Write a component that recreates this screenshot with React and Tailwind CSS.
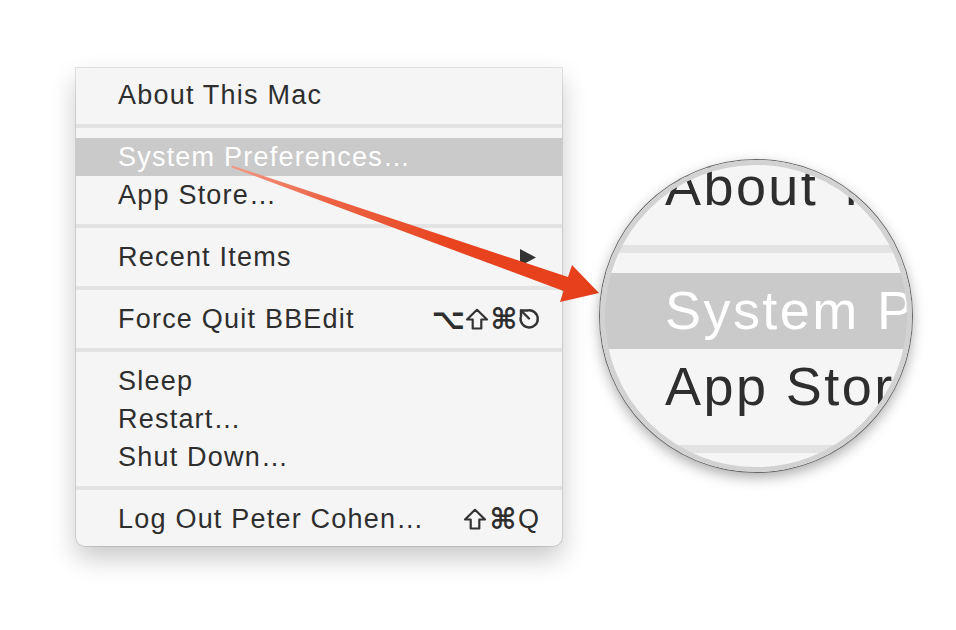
import React from 'react';

const Sep = () => (
  <div className="h-[24px] flex items-center">
    <div className="w-full h-[4px] bg-[#e3e3e3]" />
  </div>
);

const Glyph = ({ children, w }) => (
  <span className={`inline-flex justify-center ${w}`}>{children}</span>
);

const ShiftIcon = () => (
  <svg width="24" height="22" viewBox="0 0 24 22" fill="none" stroke="#333" strokeWidth="2.2" strokeLinejoin="round">
    <path d="M12 1.8 L22 11.5 H16.3 V20.5 H7.7 V11.5 H2 Z" />
  </svg>
);

const EscIcon = () => (
  <svg width="24" height="22" viewBox="0 0 24 22" fill="none" stroke="#333" strokeWidth="2.4" strokeLinecap="round">
    <path d="M10 2.4 A8.6 8.6 0 1 1 2.6 10" />
    <path d="M3 2.5 L11 10.5" />
    <path d="M3 2.5 H9 M3 2.5 V8.5" />
  </svg>
);

const Row = ({ label, active, right }) => (
  <div
    className={`h-[38px] leading-[36px] pl-[42px] pr-[19px] flex items-center justify-between whitespace-nowrap ${
      active ? 'bg-[#cacaca] text-white' : ''
    }`}
  >
    <span>{label}</span>
    {right}
  </div>
);

function Menu({ shadow }) {
  return (
    <div
      className={`w-[486px] bg-[#f5f5f5] rounded-b-[9px] py-[8px] text-[#2e2e2e] text-[27px] tracking-[0.045em] ${
        shadow ? 'shadow-[0_0_0_1px_rgba(0,0,0,0.1),0_12px_26px_rgba(0,0,0,0.22)]' : ''
      }`}
      style={{ fontFamily: '"Liberation Sans", Arial, sans-serif' }}
    >
      <Row label="About This Mac" />
      <Sep />
      <Row label="System Preferences…" active />
      <Row label="App Store…" />
      <Sep />
      <Row
        label="Recent Items"
        right={
          <svg width="18" height="17" viewBox="0 0 18 17" className="mr-[6px]">
            <polygon points="1,0 17,8.5 1,17" fill="#333" />
          </svg>
        }
      />
      <Sep />
      <Row
        label="Force Quit BBEdit"
        right={
          <span className="flex items-center tracking-normal text-[29px] font-bold" style={{ fontFamily: '"DejaVu Sans", sans-serif' }}>
            <Glyph w="w-[27px]">⌥</Glyph>
            <span className="w-[29px] flex justify-center"><ShiftIcon /></span>
            <Glyph w="w-[26px]">⌘</Glyph>
            <span className="w-[26px] flex justify-center"><EscIcon /></span>
          </span>
        }
      />
      <Sep />
      <Row label="Sleep" />
      <Row label="Restart…" />
      <Row label="Shut Down…" />
      <Sep />
      <Row
        label="Log Out Peter Cohen…"
        right={
          <span className="flex items-center tracking-normal text-[29px] mr-[4px]" style={{ fontFamily: '"DejaVu Sans", sans-serif' }}>
            <span className="w-[29px] flex justify-center"><ShiftIcon /></span>
            <Glyph w="w-[26px] font-bold">⌘</Glyph>
            <span className="text-[27px] ml-[2px]" style={{ fontFamily: '"Liberation Sans", Arial, sans-serif' }}>Q</span>
          </span>
        }
      />
    </div>
  );
}

export default function App() {
  return (
    <div className="relative w-[956px] h-[630px] bg-white overflow-hidden">
      <div className="pt-[68px] pl-[76px]">
        <Menu shadow />
      </div>

      {/* pointer arrow */}
      <svg className="absolute left-0 top-0" width="956" height="630" viewBox="0 0 956 630">
        <defs>
          <linearGradient id="arr" x1="232" y1="166" x2="599" y2="293" gradientUnits="userSpaceOnUse">
            <stop offset="0" stopColor="#f29a86" />
            <stop offset="0.25" stopColor="#ec6546" />
            <stop offset="0.6" stopColor="#e8441f" />
            <stop offset="1" stopColor="#e63f1b" />
          </linearGradient>
        </defs>
        <polygon
          points="232,165.5 568,277 572,265 599,293 560,302 563.5,291 231.5,167.5"
          fill="url(#arr)"
        />
      </svg>

      {/* magnifier */}
      <div className="absolute left-[600px] top-[160px] w-[312px] h-[312px] rounded-full shadow-[0_5px_14px_rgba(0,0,0,0.35)]">
        <div className="relative w-full h-full rounded-full overflow-hidden bg-[#f5f5f5]">
          <div className="absolute left-[-19px] top-[-27px] origin-top-left scale-200">
            <Menu />
          </div>
        </div>
        <div className="absolute inset-0 rounded-full border-[5px] border-[#d2d2d2] shadow-[0_0_0_1px_#666]" />
      </div>
    </div>
  );
}
